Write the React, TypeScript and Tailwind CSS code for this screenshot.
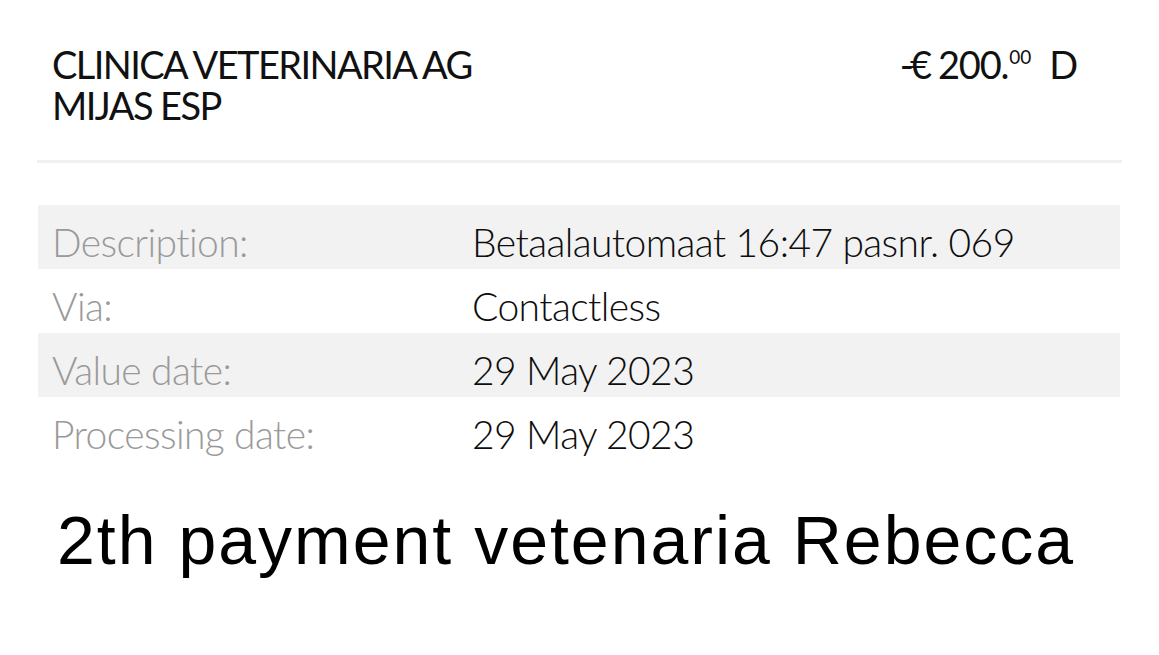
import React from 'react';

const rows = [
  { label: 'Description:', value: 'Betaalautomaat 16:47 pasnr. 069', shaded: true },
  { label: 'Via:', value: 'Contactless', shaded: false },
  { label: 'Value date:', value: '29 May 2023', shaded: true },
  { label: 'Processing date:', value: '29 May 2023', shaded: false },
];

export default function App() {
  return (
    <div className="w-[1159px] h-[655px] bg-white overflow-hidden">
      <div className="mx-[38px] font-['Lato','Open_Sans',sans-serif]">
        {/* header */}
        <div className="flex justify-between pt-[44px] pl-[14px] pr-[44px] text-[38px] leading-[41px] text-[#111]">
          <div className="tracking-[-1.6px]">
            CLINICA VETERINARIA AG
            <br />
            MIJAS ESP
          </div>
          <div className="flex items-start whitespace-nowrap tracking-[-1.2px]">
            <span className="tracking-[-4px]">-€</span>
            <span className="ml-[10px]">200.</span>
            <span className="text-[19px] leading-[26px] ml-[1px] tracking-[0px]">00</span>
            <span className="ml-[18px]">D</span>
          </div>
        </div>

        <div className="mt-[34px] h-[3px] bg-[#f0f0f0] -mx-[1px]" />

        {/* details */}
        <div className="mt-[42px] mr-[1px]">
          {rows.map((r) => (
            <div
              key={r.label}
              className={`flex h-[64px] pt-[11px] text-[39px] leading-[53px] tracking-[-0.6px] font-light ${r.shaded ? 'bg-[#f2f2f2]' : 'bg-white'}`}
            >
              <div className="w-[434px] pl-[14px] text-[#9a9a9a]">{r.label}</div>
              <div className="text-[#0d0d0d]">{r.value}</div>
            </div>
          ))}
        </div>
      </div>

      <div className="mt-[45px] pl-[57px] font-['Liberation_Sans',Arial,sans-serif] text-[68px] leading-[68px] tracking-[2px] text-black whitespace-nowrap">
        2th payment vetenaria Rebecca
      </div>
    </div>
  );
}
